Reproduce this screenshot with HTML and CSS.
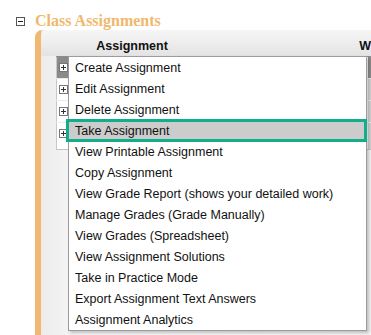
FILE: index.html
```html
<!DOCTYPE html>
<html lang="en">
<head>
  <meta charset="UTF-8">
  <title>Class Assignments</title>
  <link rel="stylesheet" href="styles.css">
</head>
<body>

  <div class="section-head">
    <span class="toggle">
      <svg width="9" height="9" viewBox="0 0 9 9"><rect x="0.5" y="0.5" width="8" height="8" fill="#fff" stroke="#555"/><path d="M2 4.5h5" stroke="#222"/></svg>
    </span>
    <h2>Class Assignments</h2>
  </div>

  <div class="panel">
    <div class="grid-head">
      <div class="col-assign">Assignment</div>
      <div class="col-gap"></div>
      <div class="col-w">W</div>
    </div>

    <div class="grid-body">
      <div class="row active"><span class="exp"></span><span class="name"></span><span class="wcell"></span></div>
      <div class="row"><span class="exp"></span><span class="name"></span><span class="wcell"></span></div>
      <div class="row"><span class="exp"></span><span class="name"></span><span class="wcell"></span></div>
      <div class="row"><span class="exp"></span><span class="name"></span><span class="wcell"></span></div>
    </div>

    <ul class="menu">
      <li>Create Assignment</li>
      <li>Edit Assignment</li>
      <li>Delete Assignment</li>
      <li class="selected">Take Assignment</li>
      <li>View Printable Assignment</li>
      <li>Copy Assignment</li>
      <li>View Grade Report (shows your detailed work)</li>
      <li>Manage Grades (Grade Manually)</li>
      <li>View Grades (Spreadsheet)</li>
      <li>View Assignment Solutions</li>
      <li>Take in Practice Mode</li>
      <li>Export Assignment Text Answers</li>
      <li>Assignment Analytics</li>
    </ul>
  </div>

</body>
</html>
```

FILE: styles.css
```css
body {
  margin: 0;
  font-family: "Liberation Sans", Arial, sans-serif;
  background-color: white;
  overflow: hidden;
}

.section-head {
  display: flex;
  align-items: center;
  gap: 10px;
  padding: 11px 0 0 16px;
}

.toggle {
  display: flex;
  margin-top: 2px;
}

.section-head h2 {
  margin: 0;
  font-family: "Liberation Serif", "Times New Roman", serif;
  font-size: 16px;
  line-height: 19px;
  font-weight: bold;
  color: #f0b86e;
}

.panel {
  position: relative;
  margin-left: 35px;
  height: 305px;
  border-left: 6px solid #f0b870;
  border-top-left-radius: 7px;
  background: linear-gradient(to right, #ececec, #f7f7f7 40px, #f4f4f4);
}

.grid-head {
  display: flex;
  align-items: flex-end;
  height: 26px;
  padding-left: 15px;
  box-sizing: border-box;
  padding-bottom: 3px;
  background: linear-gradient(#f6f6f6, #f0f0f0 35%, #e3e3e3);
  border-top-left-radius: 6px;
  font-size: 12.5px;
  font-weight: bold;
  color: #111;
}

.col-assign {
  width: 156px;
  text-align: center;
}

.col-gap {
  width: 155px;
}

.grid-body {
  margin-left: 15px;
  border-top: 1px solid #8c8c8c;
  border-bottom: 1px solid #c4c4c4;
  background-color: white;
}

.row {
  display: flex;
  height: 21px;
  border-bottom: 1px solid #ececec;
}

.row:last-child {
  height: 26px;
  border-bottom: none;
}

.exp {
  width: 12px;
  position: relative;
  border-left: 1px solid #c8c8c8;
}

.exp::before {
  content: "";
  position: absolute;
  left: 2px;
  top: 6px;
  width: 7px;
  height: 7px;
  border: 1px solid #777;
  background:
    linear-gradient(#333, #333) center / 5px 1px no-repeat,
    linear-gradient(#333, #333) center / 1px 5px no-repeat,
    white;
}

.name {
  width: 299px;
}

.wcell {
  flex: 1;
  background-color: #d2d2d2;
}

.row.active .exp,
.row.active .wcell {
  background-color: #8a8a8a;
}

.menu {
  position: absolute;
  left: 27px;
  top: 26px;
  width: 297px;
  margin: 0;
  padding: 0;
  list-style: none;
  background-color: white;
  border: 1px solid #9c9c9c;
  box-shadow: 2px 2px 3px rgba(0, 0, 0, 0.22);
  font-size: 12.5px;
  color: #111;
}

.menu li {
  height: 20px;
  padding-top: 1px;
  line-height: 21px;
  padding-left: 6px;
  white-space: nowrap;
}

.menu li.selected {
  position: relative;
  background-color: #cccccc;
}

.menu li.selected::after {
  content: "";
  position: absolute;
  left: -3px;
  right: -1px;
  top: -1px;
  bottom: -1px;
  border: 3px solid #12ad8b;
}
```
